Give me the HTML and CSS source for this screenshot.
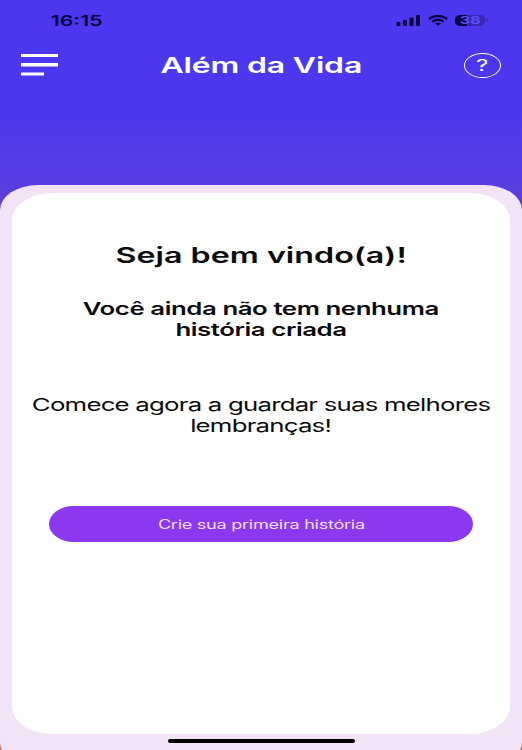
FILE: index.html
```html
<!DOCTYPE html>
<html lang="pt-BR">
<head>
  <meta charset="UTF-8" />
  <meta name="viewport" content="width=device-width, initial-scale=1.0" />
  <title>Além da Vida</title>
  <link rel="stylesheet" href="styles.css">
</head>
<body>

  <div class="status-bar">
    <span class="hora wide">16:15</span>
    <div class="status-icons">
      <svg width="25" height="11" viewBox="0 0 25 11">
        <rect x="0.5" y="7" width="4" height="4" rx="1" />
        <rect x="7" y="5" width="4" height="6" rx="1" />
        <rect x="13.5" y="2.5" width="4" height="8.5" rx="1" />
        <rect x="20" y="0" width="4" height="11" rx="1" />
      </svg>
      <svg width="20" height="11" viewBox="0 0 20 11">
        <path d="M0.8 4 Q10 -2.4 19.2 4" fill="none" stroke="#090542" stroke-width="2.3" />
        <path d="M4.2 6.6 Q10 2.6 15.8 6.6" fill="none" stroke="#090542" stroke-width="2.2" />
        <path d="M6.8 8.6 Q10 6.2 13.2 8.6 L10 10.8 Z" />
      </svg>
      <div class="bateria"><span class="wide">38</span></div>
      <svg class="polo" width="2" height="4" viewBox="0 0 2 4">
        <path d="M0 0 Q2 0.5 2 2 Q2 3.5 0 4 Z" />
      </svg>
    </div>
  </div>

  <header class="topo">
    <svg class="menu" width="37" height="22" viewBox="0 0 37 22">
      <rect x="0" y="0" width="37" height="3" />
      <rect x="0" y="9" width="37" height="3.5" />
      <rect x="0" y="18.5" width="23" height="3" />
    </svg>
    <h1><span class="wide">Além da Vida</span></h1>
    <div class="ajuda"><span class="wide">?</span></div>
  </header>

  <main class="painel">
    <section class="cartao">
      <h2><span class="wide">Seja bem vindo(a)!</span></h2>
      <h3>
        <span class="wide">Você ainda não tem nenhuma</span>
        <span class="wide">história criada</span>
      </h3>
      <p>
        <span class="wide">Comece agora a guardar suas melhores</span>
        <span class="wide">lembranças!</span>
      </p>
      <button class="criar"><span class="wide">Crie sua primeira história</span></button>
    </section>
    <div class="home-bar"></div>
  </main>

</body>
</html>
```
FILE: styles.css
```css
* {
  box-sizing: border-box;
}

html {
  overflow: hidden;
}

body {
  margin: 0;
  height: 750px;
  overflow: hidden;
  display: flex;
  flex-direction: column;
  font-family: Inter, "Liberation Sans", sans-serif;
  background: linear-gradient(#4b38ee 0, #4b38ee 110px, #583de0 185px, #6242d4 225px, #c87460 700px);
}

/* extended lettering */
.wide {
  display: inline-block;
  white-space: nowrap;
  transform: scaleX(1.5);
}

.status-bar {
  display: flex;
  justify-content: space-between;
  align-items: center;
  height: 40px;
  padding: 0 34px 0 59px;
  color: #090542;
}

.hora {
  font-size: 14.5px;
  font-weight: 600;
  transform: scaleX(1.47);
}

.status-icons {
  display: flex;
  align-items: center;
  gap: 7px;
  fill: #090542;
}

.bateria {
  width: 30px;
  height: 11px;
  border-radius: 5px / 4px;
  background: linear-gradient(90deg, #090542 12px, #3627b4 12px);
  color: #5b4cf0;
  font-size: 11px;
  font-weight: 700;
  line-height: 11px;
  text-align: center;
}

.polo {
  margin-left: -6px;
  fill: #3627b4;
}

.topo {
  display: flex;
  justify-content: space-between;
  align-items: center;
  height: 50px;
  padding: 0 21px;
  color: #fff;
}

.menu {
  fill: #fff;
}

h1, h2, h3, p {
  margin: 0;
  text-align: center;
}

h1 {
  font-size: 21.3px;
  font-weight: 600;
  letter-spacing: -0.1px;
}

.ajuda {
  width: 37px;
  height: 25px;
  border: 1px solid #fff;
  border-radius: 50%;
  font-size: 16px;
  font-weight: 400;
  line-height: 23px;
  text-align: center;
}

.painel {
  flex: 1;
  display: flex;
  flex-direction: column;
  align-items: center;
  margin: 95px 0 -17px;
  padding: 8px 12px 0;
  background: #f2e3f6;
  border-radius: 38px / 25px;
}

.cartao {
  display: flex;
  flex-direction: column;
  align-items: center;
  width: 100%;
  height: 541px;
  padding-top: 49px;
  background: #fff;
  border-radius: 40px / 27px;
  color: #0b0b0b;
}

h2 {
  font-size: 21.5px;
  font-weight: 600;
  line-height: 26px;
}

h3, p {
  display: flex;
  flex-direction: column;
  align-items: center;
  font-size: 17.8px;
  line-height: 21px;
}

h3 .wide, p .wide, .criar .wide {
  transform: scaleX(1.45);
}

h3 {
  margin-top: 30px;
  font-weight: 600;
  letter-spacing: -0.3px;
}

p {
  margin-top: 54px;
  font-weight: 400;
  letter-spacing: -0.54px;
}

.criar {
  width: 424px;
  height: 36px;
  margin-top: 70px;
  border: none;
  border-radius: 25px / 18px;
  background: #8c38ee;
  color: #f6dffb;
  font-family: inherit;
  font-size: 12.5px;
  letter-spacing: -0.2px;
}

.home-bar {
  width: 187px;
  height: 4px;
  margin-top: 5px;
  border-radius: 2px;
  background: #000;
}
```
